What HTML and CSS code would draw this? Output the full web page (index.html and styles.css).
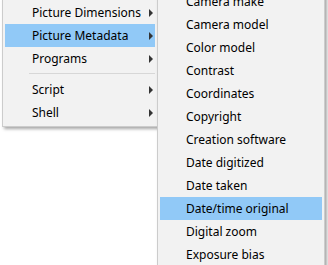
FILE: index.html
```html
<!DOCTYPE html>
<html lang="en">
<head>
  <meta charset="UTF-8" />
  <title>Context menu</title>
  <link rel="stylesheet" href="styles.css">
</head>
<body>
  <div class="menus">
    <ul class="menu menu-main">
      <li class="item has-sub">Picture Dimensions</li>
      <li class="item has-sub active">Picture Metadata</li>
      <li class="item has-sub">Programs</li>
      <li class="sep"></li>
      <li class="item has-sub">Script</li>
      <li class="item has-sub">Shell</li>
    </ul>
    <ul class="menu menu-sub">
      <li class="item">Camera make</li>
      <li class="item">Camera model</li>
      <li class="item">Color model</li>
      <li class="item">Contrast</li>
      <li class="item">Coordinates</li>
      <li class="item">Copyright</li>
      <li class="item">Creation software</li>
      <li class="item">Date digitized</li>
      <li class="item">Date taken</li>
      <li class="item active">Date/time original</li>
      <li class="item">Digital zoom</li>
      <li class="item">Exposure bias</li>
    </ul>
  </div>
</body>
</html>
```

FILE: styles.css
```css
body {
  margin: 0;
  background: #fff;
  font-family: 'Noto Sans', 'Open Sans', sans-serif;
  font-size: 12px;
  color: #000;
  overflow: hidden;
}
.menus {
  display: flex;
  align-items: flex-start;
}
.menu {
  list-style: none;
  margin: 0;
  padding: 2px;
  background: #f2f2f2;
  border: 1px solid #cccccc;
  box-shadow: 2px 2px 3px rgba(0, 0, 0, 0.35);
  box-sizing: border-box;
}
.menu-main {
  width: 156px;
  margin: -2px 0 0 2px;
}
.menu-sub {
  width: 168px;
  margin: -13px 0 0 -1px;
  position: relative;
  z-index: 1;
}
.item {
  display: flex;
  align-items: center;
  height: 23px;
  padding: 0 2px 0 27px;
  white-space: nowrap;
}
.menu-sub .item {
  padding-left: 26px;
}
.item.active {
  background: #91c9f7;
}
.has-sub::after {
  content: '';
  margin-left: auto;
  border-left: 4px solid #333;
  border-top: 4px solid transparent;
  border-bottom: 4px solid transparent;
}
.sep {
  height: 1px;
  background: #d7d7d7;
  margin: 3px 0 4px 24px;
}
```
